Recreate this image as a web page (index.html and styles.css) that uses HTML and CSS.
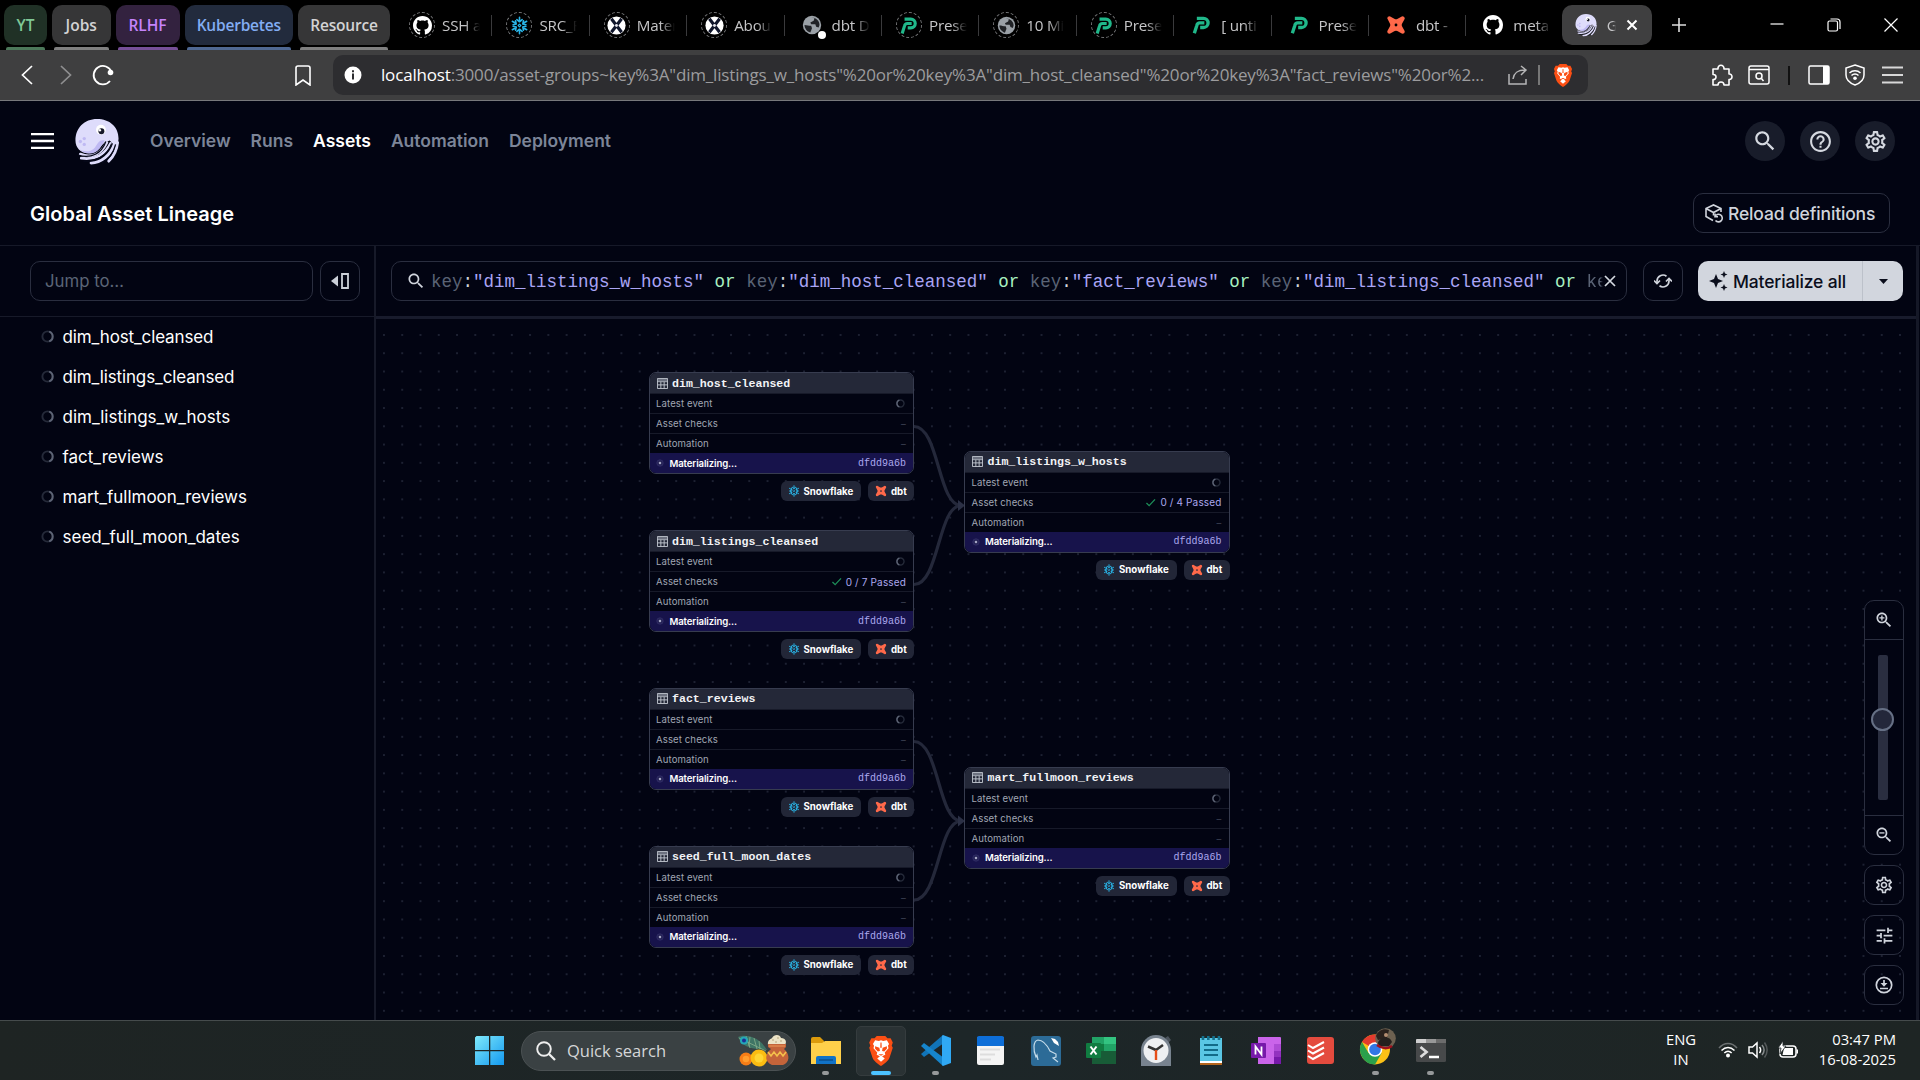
FILE: index.html
```html
<!DOCTYPE html>
<html lang="en">
<head>
<meta charset="utf-8">
<title>Global Asset Lineage</title>
<link rel="stylesheet" href="styles.css">
</head>
<body>
<svg class="defs" width="0" height="0">
  <symbol id="github" viewBox="0 0 16 16"><path fill="#fff" d="M8 0C3.58 0 0 3.58 0 8c0 3.54 2.29 6.53 5.47 7.59.4.07.55-.17.55-.38 0-.19-.01-.82-.01-1.49-2.01.37-2.53-.49-2.69-.94-.09-.23-.48-.94-.82-1.13-.28-.15-.68-.52-.01-.53.63-.01 1.08.58 1.23.82.72 1.21 1.87.87 2.33.66.07-.52.28-.87.51-1.07-1.78-.2-3.64-.89-3.64-3.95 0-.87.31-1.59.82-2.15-.08-.2-.36-1.02.08-2.12 0 0 .67-.21 2.2.82.64-.18 1.32-.27 2-.27s1.36.09 2 .27c1.53-1.04 2.2-.82 2.2-.82.44 1.1.16 1.92.08 2.12.51.56.82 1.27.82 2.15 0 3.07-1.87 3.75-3.65 3.95.29.25.54.73.54 1.48 0 1.07-.01 1.93-.01 2.2 0 .21.15.46.55.38A8.01 8.01 0 0016 8c0-4.42-3.58-8-8-8z"/></symbol>
  <symbol id="snow" viewBox="0 0 24 24"><g fill="none" stroke="#29b5e8" stroke-width="2" stroke-linecap="round" stroke-linejoin="round"><path d="M12 10.200l1.800 1.800-1.800 1.800L10.200 12z" stroke-width="1.400"/><path d="M12 1.500v5M8.700 4.500L12 7.300l3.300-2.800M12 22.500v-5M8.700 19.500L12 16.700l3.300 2.800"/><path d="M2.900 6.700l4.300 2.500M3.900 11l4-.8-.9-4.200M21.100 17.300l-4.300-2.500M20.100 13l-4 .8.900 4.200"/><path d="M21.100 6.700l-4.300 2.500M20.100 11l-4-.8.900-4.200M2.900 17.300l4.300-2.500M3.900 13l4 .8-.9 4.200"/></g></symbol>
  <symbol id="dbt" viewBox="0 0 24 24"><path fill="#ff694a" fill-rule="evenodd" d="M1.500 4Q1.500 1.500 4.500 1.500L10.500 4.800Q12 5.600 13.500 4.800L19.500 1.500Q22.500 1.500 22.500 4.500L19.200 10.500Q18.400 12 19.200 13.500L22.500 19.500Q22.500 22.500 19.500 22.500L13.500 19.200Q12 18.400 10.500 19.200L4.500 22.500Q1.500 22.500 1.500 19.500L4.800 13.500Q5.600 12 4.800 10.500ZM12 10.300a1.700 1.700 0 1 0 0 3.400 1.700 1.700 0 0 0 0-3.400z"/></symbol>
  <symbol id="xball" viewBox="0 0 24 24"><circle cx="12" cy="12" r="11.500" fill="#fff"/><g fill="none" stroke="#10162c" stroke-width="4"><path d="M5.500 3.500L18.500 20.500M18.500 3.500L5.500 20.500"/></g><circle cx="12" cy="12" r="1.800" fill="#e8e8f0"/></symbol>
  <symbol id="globe" viewBox="0 0 24 24"><circle cx="12" cy="12" r="11" fill="#9aa0a6"/><path fill="#202226" d="M3 12c3 0 5 1 8 1l1 3-2 5c-4-1-7-5-7-9zM11 3l4 1-1 3-4 2 1 2h5l1 3 3 1 1-3c0-5-4-9-10-9z"/></symbol>
  <symbol id="preset" viewBox="0 0 24 24"><g fill="none" stroke="#20b88a" stroke-width="4" stroke-linejoin="round"><path d="M7 4h8a5.500 5.500 0 0 1 0 11h-4"/><path d="M16 9.500h-5.500c-2 0-3 1-3.500 3L4 22"/></g></symbol>
  <symbol id="dagster" viewBox="0 0 46 48"><path fill="#dedcfb" d="M23 1C10 1 1 10 1 23c0 7 5 13 13 13 9 0 12-7 17-11l5-2 6 6c2-3 3-5 3-8C45 9 36 1 23 1z"/><path fill="#bfb9f3" d="M5 32c4 3 12 3 16-2 3-4 4-8 10-7l-5 8c-5 7-15 7-21 1z"/><g fill="none" stroke="#dedcfb" stroke-width="3" stroke-linecap="round"><path d="M6 37c12 5 22-1 27-12"/><path d="M7 41c13 2 24-3 30-15"/><path d="M17 46c10 0 20-8 24-20"/><path d="M35 44c4-4 8-10 9-19"/></g><g fill="none" stroke="#06081a" stroke-width="1.300"><path d="M4 38c13 4 24-2 28-14"/><path d="M9 44c13 1 24-5 29-18"/><path d="M28 46c8-4 12-11 14-19"/></g><circle cx="27" cy="12" r="5" fill="#fff"/><circle cx="27.500" cy="13.500" r="3" fill="#17192b"/><circle cx="26" cy="12.500" r="1.200" fill="#fff"/><g fill="#bfb9f3"><circle cx="6" cy="24" r="1.700"/><circle cx="10" cy="21" r="1.700"/><circle cx="10" cy="27" r="1.700"/></g></symbol>
  <symbol id="brave" viewBox="0 0 24 28"><path fill="#fb4f14" d="M8 0h8l2 2h3l2 4-1 3 1 2-3 9c-1 3-5 6-8 8-3-2-7-5-8-8L1 11l1-2-1-3 2-4h3z"/><path fill="#fff" d="M12 4l2 .7 3.500-.7 2 3.500-1 1.500.5 2.500-3.500 4 .5 2L13 19l2.500 2L12 24l-3.500-3 2.500-2-3-1.500.5-2L5 11.500 5.500 9l-1-1.500L6.500 4l3.500.7z"/><path fill="#fb4f14" d="M6.500 9.500l4 1.500.5 3-2 .5-2.500-2.500zM17.500 9.500l-4 1.500-.5 3 2 .5 2.500-2.500zM9.500 17h5L12 18.500zM11.500 6h1l.2 5h-1.400z"/></symbol>
  <symbol id="search" viewBox="0 0 24 24"><path fill="currentColor" d="M15.500 14h-.79l-.28-.27C15.410 12.590 16 11.110 16 9.500 16 5.910 13.090 3 9.500 3S3 5.910 3 9.500 5.910 16 9.500 16c1.610 0 3.090-.59 4.230-1.570l.27.28v.79l5 4.990L20.490 19l-4.990-5zm-6 0C7.010 14 5 11.990 5 9.500S7.010 5 9.500 5 14 7.010 14 9.500 11.990 14 9.500 14z"/></symbol>
  <symbol id="gear" viewBox="0 0 24 24"><path fill="currentColor" d="M19.430 12.980c.04-.32.07-.64.07-.98 0-.34-.03-.66-.07-.98l2.110-1.650c.19-.15.24-.42.12-.64l-2-3.460c-.09-.16-.26-.25-.44-.25-.06 0-.12.01-.17.03l-2.490 1c-.52-.4-1.080-.73-1.690-.98l-.38-2.650C14.460 2.180 14.250 2 14 2h-4c-.25 0-.46.18-.49.42l-.38 2.650c-.61.25-1.170.59-1.690.98l-2.490-1c-.06-.02-.12-.03-.18-.03-.17 0-.34.09-.43.25l-2 3.460c-.13.22-.07.49.12.64l2.110 1.650c-.04.32-.07.65-.07.98 0 .33.03.66.07.98l-2.110 1.650c-.19.15-.24.42-.12.64l2 3.460c.09.16.26.25.44.25.06 0 .12-.01.17-.03l2.490-1c.52.4 1.080.73 1.690.98l.38 2.650c.03.24.24.42.49.42h4c.25 0 .46-.18.49-.42l.38-2.650c.61-.25 1.170-.59 1.690-.98l2.490 1c.06.02.12.03.18.03.17 0 .34-.09.43-.25l2-3.460c.12-.22.07-.49-.12-.64l-2.110-1.650zm-1.980-1.710c.04.31.05.52.05.73 0 .21-.02.43-.05.73l-.14 1.130.89.7 1.080.84-.7 1.210-1.270-.51-1.040-.42-.9.68c-.43.32-.84.56-1.250.73l-1.060.43-.16 1.130-.2 1.350h-1.400l-.19-1.350-.16-1.130-1.060-.43c-.43-.18-.83-.41-1.230-.71l-.91-.7-1.060.43-1.270.51-.7-1.210 1.080-.84.89-.7-.14-1.130c-.03-.31-.05-.54-.05-.74s.02-.43.05-.73l.14-1.130-.89-.7-1.080-.84.7-1.210 1.270.51 1.040.42.9-.68c.43-.32.84-.56 1.250-.73l1.060-.43.16-1.130.2-1.350h1.390l.19 1.350.16 1.130 1.060.43c.43.18.83.41 1.230.71l.91.7 1.060-.43 1.270-.51.7 1.210-1.070.85-.89.7.14 1.130zM12 8c-2.210 0-4 1.790-4 4s1.790 4 4 4 4-1.790 4-4-1.790-4-4-4zm0 6c-1.100 0-2-.9-2-2s.9-2 2-2 2 .9 2 2-.9 2-2 2z"/></symbol>
  <symbol id="table" viewBox="0 0 12 12"><path fill="none" stroke="#c5cad3" d="M.5.5h11v11H.5zM.5 4h11M.5 7.500h11M4.200 4v7.500M7.800 4v7.500"/><path fill="#6d7280" d="M1 1h10v2.500H1z"/></symbol>
  <symbol id="ring" viewBox="0 0 16 16"><circle cx="8" cy="8" r="6.300" fill="none" stroke="#252a39" stroke-width="2.400"/><path d="M10 2a6.300 6.300 0 0 1 0 12" fill="none" stroke="#5d6475" stroke-width="2.400"/></symbol>
  <symbol id="pulse" viewBox="0 0 10 10"><circle cx="5" cy="5" r="4" fill="#242154" stroke="#34316b"/><circle cx="5" cy="5" r="1.600" fill="#a5a6c4"/></symbol>
  <symbol id="check" viewBox="0 0 12 10"><path d="M1.500 5.500l3 3L11 1.500" fill="none" stroke="#1d8d58" stroke-width="1.500"/></symbol>
</svg>

<header class="tabstrip">
  <div class="groups">
    <span class="group g-green">YT</span>
    <span class="group g-gray w58">Jobs</span>
    <span class="group g-purple w64">RLHF</span>
    <span class="group g-blue w109">Kuberbetes</span>
    <span class="group g-gray w92">Resource</span>
  </div>
  <div class="tabs">
    <div class="tab"><i class="ico ringed"><svg><use href="#github"/></svg></i><b>SSH a</b></div>
    <div class="tab"><i class="ico ringed"><svg><use href="#snow"/></svg></i><b>SRC_F</b></div>
    <div class="tab"><i class="ico ringed"><svg><use href="#xball"/></svg></i><b>Mater</b></div>
    <div class="tab"><i class="ico ringed"><svg><use href="#xball"/></svg></i><b>Abou</b></div>
    <div class="tab"><i class="ico dotted"><svg><use href="#globe"/></svg></i><b>dbt D</b></div>
    <div class="tab"><i class="ico ringed"><svg><use href="#preset"/></svg></i><b>Prese</b></div>
    <div class="tab"><i class="ico ringed"><svg><use href="#globe"/></svg></i><b>10 Mi</b></div>
    <div class="tab"><i class="ico ringed"><svg><use href="#preset"/></svg></i><b>Prese</b></div>
    <div class="tab"><i class="ico"><svg><use href="#preset"/></svg></i><b>[ unti</b></div>
    <div class="tab"><i class="ico"><svg><use href="#preset"/></svg></i><b>Prese</b></div>
    <div class="tab"><i class="ico"><svg><use href="#dbt"/></svg></i><b>dbt -</b></div>
    <div class="tab last"><i class="ico"><svg><use href="#github"/></svg></i><b>meta</b></div>
    <div class="tab active"><svg width="22" height="24"><use href="#dagster"/></svg><b>G</b><svg width="12" height="12" viewBox="0 0 12 12"><path d="M1.500 1.500l9 9M10.500 1.500l-9 9" stroke="#fff" stroke-width="2"/></svg></div>
  </div>
  <svg class="plus" width="14" height="14" viewBox="0 0 14 14"><path d="M7 0v14M0 7h14" stroke="#ddd" stroke-width="1.600"/></svg>
  <div class="winbtns">
    <svg width="14" height="14" viewBox="0 0 14 14"><path d="M.5 6h13" stroke="#fff" stroke-width="1.200"/></svg>
    <svg width="14" height="14" viewBox="0 0 14 14"><g fill="none" stroke="#fff" stroke-width="1.200"><rect x="1" y="3" width="9.500" height="10" rx="1.500"/><path d="M3.500 1H10a3 3 0 0 1 3 3v7"/></g></svg>
    <svg width="14" height="14" viewBox="0 0 14 14"><path d="M.5.500l13 13M13.500.500l-13 13" stroke="#fff" stroke-width="1.200"/></svg>
  </div>
</header>

<div class="toolbar">
  <svg class="t-back" width="12" height="20" viewBox="0 0 12 20"><path d="M11 1L1.500 10 11 19" fill="none" stroke="#fff" stroke-width="1.700"/></svg>
  <svg class="t-fwd" width="12" height="20" viewBox="0 0 12 20"><path d="M1 1l9.500 9L1 19" fill="none" stroke="#8f8f90" stroke-width="1.700"/></svg>
  <svg class="t-reload" width="22" height="22" viewBox="0 0 22 22"><path d="M18 17a9.200 9.200 0 1 1 1.500-9" fill="none" stroke="#fff" stroke-width="1.800"/><circle cx="18.500" cy="8.500" r="2.800" fill="#fff"/></svg>
  <svg class="t-mark" width="16" height="21" viewBox="0 0 16 21"><path d="M1 3a2 2 0 0 1 2-2h10a2 2 0 0 1 2 2v17l-7-5-7 5z" fill="none" stroke="#fff" stroke-width="1.600"/></svg>
  <div class="urlbar">
    <svg width="18" height="18" viewBox="0 0 18 18"><circle cx="9" cy="9" r="8.500" fill="#fff"/><path d="M9 4.200v2M9 7.600v6" stroke="#2e2e31" stroke-width="2"/></svg>
    <span class="url"><em>localhost</em>:3000/asset-groups~key%3A"dim_listings_w_hosts"%20or%20key%3A"dim_host_cleansed"%20or%20key%3A"fact_reviews"%20or%2...</span>
    <svg width="20" height="20" viewBox="0 0 20 20"><path d="M1 9v10h17v-5M5 14c1-6 4-9 12-9M13 1l5 4-5 5" fill="none" stroke="#b5b5b6" stroke-width="1.500"/></svg>
    <span class="udiv"></span>
    <svg width="20" height="23"><use href="#brave"/></svg>
  </div>
  <div class="exts">
    <svg width="22" height="22" viewBox="0 0 22 22"><path d="M2 5h5c-.7-5 6.500-5 6 0h5v5c4-.5 4 6 0 5.500V21h-5c0-4-6-4-6 0H2v-5.500c4 .5 4-5.500 0-5z" fill="none" stroke="#fff" stroke-width="1.600" stroke-linejoin="round"/></svg>
    <svg width="22" height="20" viewBox="0 0 22 20"><g fill="none" stroke="#fff" stroke-width="1.500"><rect x="1" y="1" width="20" height="18" rx="2"/><path d="M1 4.500h20M13.500 13.500l2 2.500"/><circle cx="11" cy="11" r="3"/></g></svg>
    <span class="ediv"></span>
    <svg width="22" height="20" viewBox="0 0 22 20"><rect x="1" y="1" width="20" height="18" rx="1.500" fill="none" stroke="#fff" stroke-width="1.500"/><path d="M15 1h6v18h-6z" fill="#fff"/></svg>
    <svg width="20" height="22" viewBox="0 0 20 22"><g fill="none" stroke="#fff" stroke-width="1.500"><path d="M10 1l9 3v7c0 5-5 8.500-9 10-4-1.500-9-5-9-10V4z"/><path d="M4.500 9c3-3 8-3 11 0M6.500 11.500c2-2 5-2 7 0"/></g><circle cx="10" cy="14.300" r="1.800" fill="#fff"/></svg>
    <svg class="t-menu" width="21" height="18" viewBox="0 0 21 18"><path d="M0 1.500h21M0 9h21M0 16.500h21" stroke="#d8d8d8" stroke-width="1.800"/></svg>
  </div>
</div>

<div class="app">
  <nav class="topnav">
    <svg class="burger" width="23" height="16" viewBox="0 0 23 16"><path d="M0 1.200h23M0 8h23M0 14.800h23" stroke="#fff" stroke-width="2.300"/></svg>
    <svg class="logo" width="46" height="47"><use href="#dagster"/></svg>
    <div class="links"><a>Overview</a><a>Runs</a><a class="on">Assets</a><a>Automation</a><a>Deployment</a></div>
    <div class="round"><svg width="26" height="26"><use href="#search"/></svg></div>
    <div class="round"><svg width="25" height="25" viewBox="0 0 24 24"><path fill="currentColor" d="M11 18h2v-2h-2v2zm1-16C6.480 2 2 6.480 2 12s4.480 10 10 10 10-4.480 10-10S17.520 2 12 2zm0 18c-4.410 0-8-3.590-8-8s3.590-8 8-8 8 3.590 8 8-3.590 8-8 8zm0-14c-2.210 0-4 1.790-4 4h2c0-1.100.9-2 2-2s2 .9 2 2c0 2-3 1.750-3 5h2c0-2.250 3-2.500 3-5 0-2.210-1.790-4-4-4z"/></svg></div>
    <div class="round"><svg width="25" height="25"><use href="#gear"/></svg></div>
  </nav>
  <div class="titlebar">
    <h1>Global Asset Lineage</h1>
    <button class="reload"><svg width="18" height="19" viewBox="0 0 18 19"><g fill="none" stroke="currentColor" stroke-width="1.600"><path d="M8 16.500L1 12.500v-8L8.500 1 16 4.500V8M1 4.500l7.500 4 7.500-4M8.500 8.500v3"/><path d="M10 12.500a3.800 3.800 0 1 1 .5 4M10 9.500v3.200h3"/></g></svg><span>Reload definitions</span></button>
  </div>
  <div class="work">
    <aside class="side">
      <div class="jump"><div class="field">Jump to…</div><div class="sq"><svg width="18" height="16" viewBox="0 0 18 16"><path fill="#cbd0d8" d="M7 2.500v11L0 8z"/><path d="M11 1h6v14h-6z" fill="none" stroke="#cbd0d8" stroke-width="1.800"/></svg></div></div>
      <ul>
        <li><svg width="13" height="13"><use href="#ring"/></svg><span class="tight">dim_host_cleansed</span></li>
        <li><svg width="13" height="13"><use href="#ring"/></svg><span class="tight">dim_listings_cleansed</span></li>
        <li><svg width="13" height="13"><use href="#ring"/></svg><span>dim_listings_w_hosts</span></li>
        <li><svg width="13" height="13"><use href="#ring"/></svg><span>fact_reviews</span></li>
        <li><svg width="13" height="13"><use href="#ring"/></svg><span>mart_fullmoon_reviews</span></li>
        <li><svg width="13" height="13"><use href="#ring"/></svg><span>seed_full_moon_dates</span></li>
      </ul>
    </aside>
    <main class="main">
      <div class="querybar">
        <div class="query"><svg width="20" height="20"><use href="#search"/></svg><code><s>key</s>:<q>"dim_listings_w_hosts"</q> <u>or</u> <s>key</s>:<q>"dim_host_cleansed"</q> <u>or</u> <s>key</s>:<q>"fact_reviews"</q> <u>or</u> <s>key</s>:<q>"dim_listings_cleansed"</q> <u>or</u> <s>ke</s></code><svg width="12" height="12" viewBox="0 0 12 12"><path d="M1 1l10 10M11 1L1 11" stroke="#d5d9e0" stroke-width="1.700"/></svg></div>
        <div class="sq"><svg width="18" height="18" viewBox="0 0 18 18"><g fill="none" stroke="#d0d4dc" stroke-width="1.700"><path d="M3 10.500V9a6 6 0 0 1 9.500-4.800M15 7.500V9a6 6 0 0 1-9.500 4.800"/><path d="M0 8.500l3 3 3-3M12 9.500l3-3 3 3"/></g></svg></div>
        <div class="mat"><svg width="19" height="20" viewBox="0 0 19 20"><path fill="#0b0e1c" d="M7 3l2 5 5 2-5 2-2 5-2-5-5-2 5-2zM15 0l1 2.500 2.500 1L16 4.500 15 7l-1-2.500-2.500-1 2.500-1zM15 13l1 2.500 2.500 1-2.500 1L15 20l-1-2.500-2.500-1 2.500-1z"/></svg><span>Materialize all</span><i><svg width="9" height="5" viewBox="0 0 9 5"><path d="M0 0h9L4.500 5z" fill="#0b0e1c"/></svg></i></div>
      </div>
      <div class="canvas">
        <svg class="edges" width="1540" height="701"><g fill="none" stroke="#24283a" stroke-width="3.200"><path d="M538 107.500C563 107.500 562 186.500 585 186.500M538 265.500C563 265.500 562 186.500 585 186.500"/><path d="M538 422.500C563 422.500 562 502 585 502M538 581C563 581 562 502 585 502"/></g><path fill="#2b3045" d="M582 181l7 5.500-7 5.500zM582 496.500l7 5.500-7 5.500z"/></svg>

        <section class="node n1"><div class="card"><h2><svg width="11" height="11"><use href="#table"/></svg>dim_host_cleansed</h2><p>Latest event<svg class="flip" width="9" height="9"><use href="#ring"/></svg></p><p>Asset checks<em>–</em></p><p>Automation<em>–</em></p><p class="run"><svg width="8" height="8"><use href="#pulse"/></svg><strong>Materializing...</strong><code>dfdd9a6b</code></p></div><div class="tags"><span class="sf"><svg width="12" height="12"><use href="#snow"/></svg>Snowflake</span><span class="db"><svg width="12" height="12"><use href="#dbt"/></svg>dbt</span></div></section>

        <section class="node n2"><div class="card"><h2><svg width="11" height="11"><use href="#table"/></svg>dim_listings_cleansed</h2><p>Latest event<svg class="flip" width="9" height="9"><use href="#ring"/></svg></p><p>Asset checks<a><svg width="11" height="9"><use href="#check"/></svg>0 / 7 Passed</a></p><p>Automation<em>–</em></p><p class="run"><svg width="8" height="8"><use href="#pulse"/></svg><strong>Materializing...</strong><code>dfdd9a6b</code></p></div><div class="tags"><span class="sf"><svg width="12" height="12"><use href="#snow"/></svg>Snowflake</span><span class="db"><svg width="12" height="12"><use href="#dbt"/></svg>dbt</span></div></section>

        <section class="node n3"><div class="card"><h2><svg width="11" height="11"><use href="#table"/></svg>fact_reviews</h2><p>Latest event<svg class="flip" width="9" height="9"><use href="#ring"/></svg></p><p>Asset checks<em>–</em></p><p>Automation<em>–</em></p><p class="run"><svg width="8" height="8"><use href="#pulse"/></svg><strong>Materializing...</strong><code>dfdd9a6b</code></p></div><div class="tags"><span class="sf"><svg width="12" height="12"><use href="#snow"/></svg>Snowflake</span><span class="db"><svg width="12" height="12"><use href="#dbt"/></svg>dbt</span></div></section>

        <section class="node n4"><div class="card"><h2><svg width="11" height="11"><use href="#table"/></svg>seed_full_moon_dates</h2><p>Latest event<svg class="flip" width="9" height="9"><use href="#ring"/></svg></p><p>Asset checks<em>–</em></p><p>Automation<em>–</em></p><p class="run"><svg width="8" height="8"><use href="#pulse"/></svg><strong>Materializing...</strong><code>dfdd9a6b</code></p></div><div class="tags"><span class="sf"><svg width="12" height="12"><use href="#snow"/></svg>Snowflake</span><span class="db"><svg width="12" height="12"><use href="#dbt"/></svg>dbt</span></div></section>

        <section class="node n5"><div class="card"><h2><svg width="11" height="11"><use href="#table"/></svg>dim_listings_w_hosts</h2><p>Latest event<svg class="flip" width="9" height="9"><use href="#ring"/></svg></p><p>Asset checks<a><svg width="11" height="9"><use href="#check"/></svg>0 / 4 Passed</a></p><p>Automation<em>–</em></p><p class="run"><svg width="8" height="8"><use href="#pulse"/></svg><strong>Materializing...</strong><code>dfdd9a6b</code></p></div><div class="tags"><span class="sf"><svg width="12" height="12"><use href="#snow"/></svg>Snowflake</span><span class="db"><svg width="12" height="12"><use href="#dbt"/></svg>dbt</span></div></section>

        <section class="node n6"><div class="card"><h2><svg width="11" height="11"><use href="#table"/></svg>mart_fullmoon_reviews</h2><p>Latest event<svg class="flip" width="9" height="9"><use href="#ring"/></svg></p><p>Asset checks<em>–</em></p><p>Automation<em>–</em></p><p class="run"><svg width="8" height="8"><use href="#pulse"/></svg><strong>Materializing...</strong><code>dfdd9a6b</code></p></div><div class="tags"><span class="sf"><svg width="12" height="12"><use href="#snow"/></svg>Snowflake</span><span class="db"><svg width="12" height="12"><use href="#dbt"/></svg>dbt</span></div></section>

        <div class="controls">
          <div class="zoom">
            <div class="zb"><svg width="20" height="20" viewBox="0 0 24 24"><use href="#search"/><path d="M9.500 6.500v6M6.500 9.500h6" stroke="currentColor" stroke-width="1.600"/></svg></div>
            <div class="slider"><span class="track"><span class="thumb"></span></span></div>
            <div class="zb"><svg width="20" height="20" viewBox="0 0 24 24"><use href="#search"/><path d="M6.500 9.500h6" stroke="currentColor" stroke-width="1.600"/></svg></div>
          </div>
          <div class="sq"><svg width="20" height="20"><use href="#gear"/></svg></div>
          <div class="sq"><svg width="21" height="21" viewBox="0 0 24 24"><path fill="currentColor" d="M3 17v2h6v-2H3zM3 5v2h10V5H3zm10 16v-2h8v-2h-8v-2h-2v6h2zM7 9v2H3v2h4v2h2V9H7zm14 4v-2H11v2h10zm-6-4h2V7h4V5h-4V3h-2v6z"/></svg></div>
          <div class="sq"><svg width="18" height="18" viewBox="0 0 18 18"><g fill="none" stroke="currentColor" stroke-width="1.700"><circle cx="9" cy="9" r="7.700"/><path d="M5 12.500h8M9 4v4"/></g><path fill="currentColor" d="M5.500 7h7L9 10.800z"/></svg></div>
        </div>
      </div>
    </main>
  </div>
</div>

<footer class="taskbar">
  <svg class="win" width="30" height="30" viewBox="0 0 30 30"><defs><linearGradient id="wg" x1="0" y1="0" x2="1" y2="1" gradientUnits="objectBoundingBox"><stop offset="0" stop-color="#7fe9fb"/><stop offset="1" stop-color="#1399f0"/></linearGradient></defs><path fill="url(#wg)" d="M1.500 0H14v14H0V1.500zM15.300 0H29v14H15.300zM0 15.300h14V29H0zM15.300 15.300H29V29H15.300z"/></svg>
  <div class="qs">
    <svg width="20" height="20" viewBox="0 0 20 20"><circle cx="8" cy="8" r="6.800" fill="none" stroke="#eee" stroke-width="1.900"/><path d="M13 13l6 6" stroke="#eee" stroke-width="2.300"/></svg>
    <span>Quick search</span>
    <svg width="54" height="34" viewBox="0 0 54 34"><path fill="#3f7565" d="M1 3C8 0 22 2 30 16l-7-1C12 15 4 11 1 3z"/><path d="M2 4l27 13M9 2l4 12M17 4l3 11M13 3l-1 9M22 7l1 8" stroke="#88b08c" stroke-width=".8"/><circle cx="7" cy="6.500" r="4" fill="#25a7b7"/><circle cx="7" cy="6.500" r="2" fill="#1b2e95"/><circle cx="9" cy="25" r="6.500" fill="#f67d16"/><circle cx="22" cy="24" r="8.500" fill="#fbbd12"/><circle cx="22" cy="24" r="4.500" fill="#ffd633"/><circle cx="9" cy="25" r="3.300" fill="#ff9d2e"/><path fill="#ece3c6" d="M31 11c-1-5 3-6 4-7 2-4 8-4 9 0 5 0 6 4 4 7z"/><g fill="#c9bb94"><circle cx="36" cy="6" r="1"/><circle cx="41" cy="4" r="1"/><circle cx="44" cy="7" r="1"/><circle cx="39" cy="8" r="1"/></g><path fill="#c4643a" d="M31 10h18v3l-2 2c7 6 5 14-1 16H35c-7-3-8-10-1-16l-3-2z"/><path fill="none" stroke="#f4c04b" stroke-width="1.600" d="M31 18l3 4 3-4 3 4 3-4 3 4 3-4"/><path d="M32 12h16" stroke="#e08850" stroke-width="1.500"/></svg>
  </div>
  <div class="dock">
    <div class="app-i on"><svg width="30" height="30" viewBox="0 0 30 30"><path fill="#dc9b0c" d="M0 3a2 2 0 0 1 2-2h7l4 4v5H0z"/><path fill="#ffd04a" d="M0 7h11l3-2h16v23H0z"/><path fill="#1173c7" d="M5 28v-6a2 2 0 0 1 2-2h16a2 2 0 0 1 2 2v6z"/><path d="M8 24h14" stroke="#0b4f8e" stroke-width="1.500"/></svg></div>
    <div class="app-i cur"><svg width="26" height="30"><use href="#brave"/></svg></div>
    <div class="app-i on"><svg width="30" height="31" viewBox="0 0 30 31"><path fill="#1174b8" d="M22 0L0 19l3 3L23 8z"/><path fill="#1685cc" d="M0 11l3-3 20 15-1 8z"/><path fill="#30a9f4" d="M22 0l8 3v25l-8 3-1-1V1z"/></svg></div>
    <div class="app-i"><svg width="27" height="29" viewBox="0 0 27 29"><rect y="1" width="27" height="28" rx="2" fill="#f4f4f4"/><path fill="#0d6ed8" d="M0 2q0-2 2-2h23q2 0 2 2v8H0z"/><path d="M3 13.500h20M3 18.500h15M3 23.500h11" stroke="#ddd" stroke-width="2"/></svg></div>
    <div class="app-i"><svg width="30" height="30" viewBox="0 0 30 30"><rect width="30" height="30" rx="3" fill="#2c6b97"/><path d="M7 24l-1-5-1 2C2 14 2 5 7 4c5 0 9 5 12 11l6 3 0 3-3 1 5 4" fill="none" stroke="#c5dcea" stroke-width="1.200"/><path d="M20 2l3 5 5 3-1-4-3-3z" fill="#fff"/></svg></div>
    <div class="app-i"><svg width="30" height="29" viewBox="0 0 30 29"><path fill="#21a366" d="M6 1h12v8H6z"/><path fill="#33c481" d="M18 1h12v7H18z"/><path fill="#107c41" d="M6 8h24v7H6z"/><path fill="#185c37" d="M6 15h24v13H6z"/><path fill="#21a366" d="M18 8h12v7H18z"/><rect y="7" width="15" height="15" rx="1" fill="#107c41"/><path d="M4.500 10.500l6 8M10.500 10.500l-6 8" stroke="#fff" stroke-width="2"/></svg></div>
    <div class="app-i"><svg width="30" height="31" viewBox="0 0 30 31"><path fill="#4b535c" d="M24 3l3-2 3 4-3 3z"/><path fill="#78838f" d="M0 31V15a15 15 0 0 1 30 0v16z"/><circle cx="15" cy="15.500" r="12.500" fill="#eef0f2"/><path d="M15 15L7 11.500M15 15l7-5" stroke="#333" stroke-width="2.500"/><path d="M15 15v10" stroke="#e64e18" stroke-width="2.400"/></svg></div>
    <div class="app-i"><svg width="24" height="31" viewBox="0 0 24 31"><path fill="#5ac6e4" d="M1 3h22v24H1z"/><path fill="#fff" d="M1 26h22v2H1z"/><path fill="#b4651c" d="M1 28h22v2H1z"/><path d="M5 10h14M5 15h14M5 20h14" stroke="#126b88" stroke-width="2"/><path d="M4 1v4M9.300 1v4M14.600 1v4M20 1v4" stroke="#14718d" stroke-width="2.600"/></svg></div>
    <div class="app-i"><svg width="30" height="29" viewBox="0 0 30 29"><path fill="#ca64ea" d="M7 1h22q1 0 1 1v26H7z"/><path fill="#ae4bd5" d="M23 8h7v7h-7z"/><path fill="#9332bf" d="M23 15h7v6h-7z"/><path fill="#7719aa" d="M23 21h7v7h-7z"/><rect y="7" width="15" height="15" rx="1" fill="#7719aa"/><path d="M4.500 18.500v-8l6 8v-8" fill="none" stroke="#fff" stroke-width="1.800"/></svg></div>
    <div class="app-i"><svg width="27" height="27" viewBox="0 0 27 27"><rect width="27" height="27" rx="3" fill="#e44b3e"/><path d="M1 8l5 3 11-6M1 13.500l5 3 11-6M1 19l5 3 11-6" fill="none" stroke="#fff" stroke-width="2"/></svg></div>
    <div class="app-i on"><svg class="chrome" width="37" height="37" viewBox="0 0 37 37"><circle cx="16" cy="21.500" r="15" fill="#fbc116"/><path fill="#e33b2e" d="M16 21.500L3 14a15 15 0 0 1 26 0z"/><path fill="#2aa04b" d="M3 14a15 15 0 0 0 13 22.500l6.500-11.300L9.500 25z"/><circle cx="16" cy="21.500" r="7.300" fill="#fff"/><circle cx="16" cy="21.500" r="5.800" fill="#3277e6"/><circle cx="26.500" cy="10.500" r="10.300" fill="#6d6150"/><path fill="#2a211d" d="M17 8c2-6 8-8 13-6l-2 8-9 2z"/><circle cx="27" cy="7" r="2" fill="#b58e72"/><path fill="#25201e" d="M19 15c1-6 12-8 14-1l-3 4H20z"/><path d="M18 17c5 4 11 4 15 1" stroke="#a1101c" stroke-width="2.500" fill="none"/></svg></div>
    <div class="app-i on"><svg width="30" height="23" viewBox="0 0 30 23"><rect width="30" height="23" rx="1.500" fill="#47494a"/><path fill="#cfcfcf" d="M0 1q0-1 1-1h9v4H0z"/><path fill="#989898" d="M10 0h10v4H10z"/><path fill="#6c6c6c" d="M20 0h10v4H20z"/><path d="M4.500 8l6 5-6 5" fill="none" stroke="#ddd" stroke-width="2.700"/><path d="M13 18h10" stroke="#fff" stroke-width="2.500"/></svg></div>
  </div>
  <div class="lang"><span>ENG</span><span>IN</span></div>
  <div class="tray">
    <svg width="20" height="16" viewBox="0 0 20 16"><g fill="none" stroke-width="1.500"><path stroke="#6b7071" d="M1 6c5-6 13-6 18 0"/><path stroke="#fff" d="M3.500 8.500c4-4 9-4 13 0M6.300 11c2.500-2.500 5-2.500 7.400 0"/></g><circle cx="10" cy="13.500" r="2" fill="#fff"/></svg>
    <svg width="20" height="18" viewBox="0 0 20 18"><g fill="none" stroke="#fff" stroke-width="1.500"><path d="M1 6h3.500L9 2v14l-4.500-4H1zM11.500 6c1.500 2 1.500 4 0 6"/><path stroke="#858a8b" d="M14 4c2.500 3 2.500 7 0 10"/><path stroke="#54595a" d="M16.500 1.500c3.500 5 3.500 10 0 15"/></g></svg>
    <svg width="21" height="18" viewBox="0 0 21 18"><rect x="2" y="5" width="16" height="11" rx="3" fill="none" stroke="#fff" stroke-width="1.500"/><path fill="#fff" d="M6 7h9v7H4.500zM18.500 8.500H20v4h-1.500z"/><path fill="#fff" stroke="#1d2526" stroke-width=".8" d="M5 0L0 7h3l-1 6 6-8H5z"/></svg>
  </div>
  <div class="clock"><span>03:47 PM</span><span>16-08-2025</span></div>
</footer>
</body>
</html>
```
FILE: styles.css
```css
* { box-sizing: border-box; }
body { margin: 0; width: 1920px; height: 1080px; overflow: hidden; background: #020412; color: #fff; font-family: Inter, "Liberation Sans", sans-serif; display: flex; flex-direction: column; }
svg { display: block; flex: none; }
.defs { position: absolute; }

/* browser tabs */
.tabstrip { height: 50px; flex: none; background: #000; display: flex; align-items: center; font-family: "Open Sans", "Noto Sans", sans-serif; }
.groups { display: flex; gap: 5px; padding-left: 4px; width: 395px; align-self: flex-start; padding-top: 5px; }
.group { height: 40px; width: 43px; flex: none; border-radius: 10px; display: flex; align-items: center; justify-content: center; font-size: 15.500px; font-weight: 600; position: relative; }
.group::after { content: ""; position: absolute; left: 2px; right: 2px; top: 42px; height: 3px; background: currentColor; opacity: .6; border-radius: 2px 2px 0 0; }
.w58 { width: 58.500px; } .w64 { width: 64px; } .w109 { width: 108.500px; letter-spacing: -.2px; } .w92 { width: 92px; letter-spacing: -.2px; }
.g-green { background: #203126; color: #7fc896; }
.g-gray { background: #363637; color: #d3d3d4; }
.g-purple { background: #33223f; color: #c583fb; }
.g-blue { background: #222b3d; color: #83adf3; }
.tabs { display: flex; height: 50px; align-items: center; }
.tab { width: 97.400px; height: 21px; border-right: 1.500px solid #3a3a3c; display: flex; align-items: center; gap: 7px; padding-left: 14px; }
.tab.last { border-color: transparent; width: 95.500px; }
.tab b { font-weight: 400; font-size: 15.200px; letter-spacing: -.2px; color: #c6c6c8; width: 38px; white-space: nowrap; line-height: 26px; -webkit-mask-image: linear-gradient(90deg, #000 60%, transparent); mask-image: linear-gradient(90deg, #000 60%, transparent); }
.ico { width: 26px; height: 26px; flex: none; display: flex; align-items: center; justify-content: center; border-radius: 50%; position: relative; }
.ico svg { width: 20px; height: 20px; }
.ringed { border: 1.500px dashed #77787a; }
.ringed svg { width: 19px; height: 19px; }
.dotted::after { content: ""; position: absolute; right: -1px; bottom: -1px; width: 8px; height: 8px; border-radius: 50%; background: #fff; }
.tab.active { width: 90px; height: 40px; border: 0; border-radius: 10px; background: #3f3f40; padding-left: 13px; gap: 10px; }
.tab.active b { width: 9px; }
.plus { margin-left: 20px; }
.winbtns { display: flex; gap: 43px; margin-left: auto; margin-right: 22px; }

/* address bar */
.toolbar { height: 51px; flex: none; background: #3f3f40; border-bottom: 1px solid #77787b; display: flex; align-items: center; }
.t-back { margin-left: 21px; } .t-fwd { margin-left: 27px; } .t-reload { margin-left: 20px; } .t-mark { margin-left: 181px; }
.urlbar { margin-left: 22px; width: 1255px; height: 40px; background: #2d2d30; border-radius: 10px; display: flex; align-items: center; padding-left: 11px; font-family: "Open Sans", "Noto Sans", sans-serif; font-size: 17px; color: #9c9c9e; }
.url { margin-left: 19px; width: 1127px; white-space: nowrap; letter-spacing: -.17px; padding-bottom: 2px; }
.url em { font-style: normal; color: #fff; }
.udiv { width: 1.500px; height: 20px; background: #777; margin: 0 13px 0 10px; }
.exts { display: flex; align-items: center; gap: 15px; margin-left: auto; margin-right: 17px; }
.ediv { width: 2px; height: 19px; background: #111; margin: 0 3px; }
.t-menu { margin-left: 2px; }

/* application header */
.app { height: 919px; flex: none; display: flex; flex-direction: column; }
.topnav { height: 80px; flex: none; display: flex; align-items: center; padding: 0 25px 0 31px; }
.logo { margin-left: 20px; }
.links { display: flex; gap: 20px; margin-left: 30px; margin-right: auto; font-size: 17.500px; font-weight: 600; color: #7c8598; padding-bottom: 1px; }
.links .on { color: #fff; }
.round { width: 40px; height: 40px; border-radius: 50%; background: #181c2a; color: #d5d9e0; display: flex; align-items: center; justify-content: center; margin-left: 15px; }
.titlebar { height: 65px; flex: none; display: flex; align-items: center; justify-content: space-between; padding: 0 30px; border-bottom: 1.500px solid #161928; }
h1 { font-size: 20px; font-weight: 600; margin: 0; padding-top: 2px; letter-spacing: .02px; }
.reload { width: 197px; height: 40px; border: 1.500px solid #2a2e3f; border-radius: 10px; background: none; color: #d0d4dc; font: 500 17.500px Inter, sans-serif; letter-spacing: -.15px; display: flex; align-items: center; gap: 5px; padding: 0 0 0 11px; white-space: nowrap; }
.work { flex: 1; display: flex; min-height: 0; }
.side { width: 376px; flex: none; border-right: 2px solid #171a29; }
.jump { height: 71px; border-bottom: 1.500px solid #171a29; display: flex; align-items: center; gap: 7px; padding-left: 30px; }
.field { width: 283px; height: 40px; border: 1.500px solid #2a2e3f; border-radius: 10px; color: #5c6577; font-size: 16.800px; line-height: 39px; padding-left: 14px; }
.sq { width: 40px; height: 40px; flex: none; border: 1.500px solid #2a2e3f; border-radius: 10px; color: #d0d4dc; display: flex; align-items: center; justify-content: center; }
ul { list-style: none; margin: 0; padding: 0 0 0 41px; }
li { height: 40px; display: flex; align-items: center; gap: 8.500px; font-size: 17px; padding-bottom: 1px; }
.tight { letter-spacing: -.13px; }

.main { width: 1543px; flex: none; border-right: 3px solid #151827; }
.querybar { height: 73px; border-bottom: 3px solid #181b2c; display: flex; align-items: center; padding-left: 15px; }
.query { width: 1236px; height: 40px; border: 1.500px solid #2a2e3f; border-radius: 10px; margin-right: 16px; display: flex; align-items: center; color: #d0d4dc; padding-left: 14px; }
code { font-family: "Liberation Mono", monospace; }
.query code { width: 1167px; margin-left: 5px; margin-right: 6px; padding-top: 2px; font-size: 17.500px; white-space: pre; }
s { text-decoration: none; color: #5a6375; } u { text-decoration: none; color: #a8f0c0; } q { color: #aaa5f5; } q::before, q::after { content: none; }
.query code s:last-child { -webkit-mask-image: linear-gradient(90deg, #000 14px, transparent 17px); mask-image: linear-gradient(90deg, #000 14px, transparent 17px); }
.mat { margin-left: 15px; width: 205px; height: 40px; background: #d2d6de; color: #0b0e1c; border-radius: 10px; display: flex; align-items: center; padding-left: 11px; gap: 5px; font-size: 17.500px; font-weight: 500; letter-spacing: -.15px; white-space: nowrap; }
.mat i { margin-left: auto; width: 41px; height: 40px; border-left: 1px solid #bcc1ca; display: flex; align-items: center; justify-content: center; }

/* lineage graph */
.canvas { position: relative; height: 701px; background-image: radial-gradient(circle at 1px 1px, #1d2132 1px, transparent 1.300px); background-size: 18.270px 18.270px; background-position: 7px 15px; }
.edges { position: absolute; left: 0; top: 0; }
.node { position: absolute; width: 265.500px; }
.n1 { left: 272.500px; top: 53px; } .n2 { left: 272.500px; top: 211px; } .n3 { left: 272.500px; top: 368.500px; } .n4 { left: 272.500px; top: 526.500px; }
.n5 { left: 588px; top: 131.500px; } .n6 { left: 588px; top: 447.500px; }
.card { height: 102px; border: 1.500px solid #373c4f; border-radius: 7px; overflow: hidden; background: #020412; }
.card h2 { margin: 0; height: 20px; background: #242838; display: flex; align-items: center; gap: 4.500px; padding-left: 7px; font: 700 11.600px "Liberation Mono", monospace; color: #f2f3f6; }
.card p { margin: 0; height: 20px; border-top: 1px solid #171a29; padding: 0 7px 0 6.500px; display: flex; align-items: center; justify-content: space-between; font-size: 9.600px; letter-spacing: .1px; color: #a0a6b2; }
.card em { font-style: normal; color: #3d4254; }
.card a { display: flex; align-items: center; gap: 4px; color: #aca8ee; font-size: 10px; letter-spacing: .15px; }
.flip { transform: scaleX(-1); margin-right: 1px; }
.card .run { background: #17134b; border: 0; justify-content: flex-start; color: #fff; height: 20.500px; }
.run strong { margin-left: 5.500px; font-weight: 600; letter-spacing: -.12px; }
.run code { margin-left: auto; font-size: 10px; letter-spacing: 0; color: #aca8ee; }
.tags { display: flex; justify-content: flex-end; gap: 7px; margin-top: 7px; }
.tags span { height: 20px; border-radius: 6px; background: #222637; font-size: 9.700px; font-weight: 700; display: flex; align-items: center; gap: 4px; padding-left: 7px; }
.sf { width: 80.500px; } .db { width: 46px; }
.controls { position: absolute; right: 12px; top: 281px; display: flex; flex-direction: column; gap: 10px; }
.zoom { width: 40px; height: 255px; border: 1.500px solid #2a2e3f; border-radius: 10px; background: #020412; display: flex; flex-direction: column; color: #d0d4dc; }
.zb { height: 38px; display: flex; align-items: center; justify-content: center; }
.slider { flex: 1; border-top: 1.500px solid #2a2e3f; border-bottom: 1.500px solid #2a2e3f; padding: 15px 0 0 13px; }
.track { display: block; width: 10px; height: 145px; background: #2a2e40; border-radius: 2px; position: relative; }
.thumb { position: absolute; left: -7px; top: 53px; width: 23px; height: 23px; border-radius: 50%; border: 2px solid #667085; background: #23273a; }

/* taskbar */
.taskbar { height: 60px; flex: none; background: linear-gradient(90deg, #1e2423, #1d2628 50%, #1e2524); border-top: 1px solid #454b4c; display: flex; align-items: center; font-family: "Open Sans", "Noto Sans", sans-serif; }
.win { margin-left: 475px; }
.qs { margin-left: 16px; width: 275px; height: 40px; border-radius: 20px; background: #3a4143; border: 1px solid #4b5153; display: flex; align-items: center; padding-left: 14px; font-size: 16.500px; color: #d5d7d8; }
.qs span { margin-left: 11px; width: 170px; white-space: nowrap; }
.dock { display: flex; margin-left: 2px; gap: 5px; padding-left: 2.500px; }
.app-i { width: 50px; height: 50px; border-radius: 5px; display: flex; align-items: center; justify-content: center; position: relative; }
.app-i.on::after, .app-i.cur::after { content: ""; position: absolute; bottom: 1px; left: 21.500px; width: 7px; height: 4px; border-radius: 2px; background: #96999a; }
.app-i.cur { background: #2a3234; border: 1px solid #353c3e; }
.app-i.cur::after { left: 14px; width: 20px; bottom: 0; background: #4cc2ff; }
.chrome { margin: -8px 0 0 4px; }
.lang { margin-left: auto; width: 60px; display: flex; flex-direction: column; align-items: center; font-size: 14.800px; line-height: 20px; padding-bottom: 3px; }
.tray { display: flex; align-items: center; gap: 10px; margin-left: 7px; padding-bottom: 2px; }
.clock { width: 97px; margin-right: 24px; display: flex; flex-direction: column; align-items: flex-end; font-size: 14.800px; line-height: 20px; padding-bottom: 4px; }
```
